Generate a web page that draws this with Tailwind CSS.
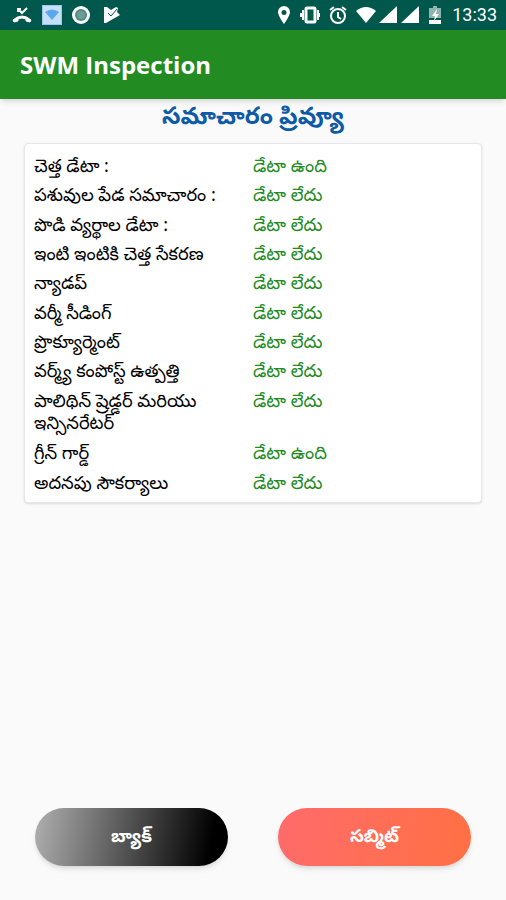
<!DOCTYPE html>
<html lang="te">
<head>
  <meta charset="UTF-8" />
  <meta name="viewport" content="width=device-width, initial-scale=1.0"/>
  <title>SWM Inspection</title>
  <script src="https://cdn.jsdelivr.net/npm/@tailwindcss/browser@4"></script>
</head>
<body class="bg-[#fafafa] min-h-screen flex flex-col font-['Noto_Sans','Noto_Sans_Telugu',sans-serif]">
  <!-- status bar -->
  <div class="h-[30px] shrink-0 bg-[#00574b] text-white flex items-center justify-between pl-3 pr-[9px]">
    <div class="flex items-center gap-[10px]">
      <svg class="w-5 h-5" viewBox="0 0 20 20" fill="none" stroke="#fff">
        <path d="M6 4l4 4 5-5M6 7V4h3" stroke-width="2"/>
        <path d="M1 15q9-8 18 0l-1 2-4-1v-2q-4-2-8 0v2l-4 1z" fill="#fff"/>
      </svg>
      <svg class="w-5 h-5" viewBox="0 0 20 20">
        <rect width="20" height="20" fill="#9cc8ee"/>
        <rect x="1" y="1" width="18" height="18" fill="#c5e0f7"/>
        <path d="M3 7q7-5 14 0l-7 8z" fill="#5aa9ec"/>
      </svg>
      <svg class="w-5 h-5" viewBox="0 0 20 20">
        <circle cx="9" cy="10" r="9" fill="#fff"/>
        <circle cx="9" cy="10" r="6" fill="#4f8b80"/>
        <circle cx="9" cy="10" r="4" fill="#6d9d95"/>
      </svg>
      <svg class="w-5 h-5" viewBox="0 0 20 20">
        <path d="M2 2h3l4 3 5-3 2 1-1 4 3 3-14 8H2z" fill="#fff"/>
        <path d="M6 8l3 3 6-7" fill="none" stroke="#00574b" stroke-width="1"/>
      </svg>
    </div>
    <div class="flex items-center gap-1">
      <svg class="w-4 h-5" viewBox="0 0 16 20">
        <path fill-rule="evenodd" d="M8 1a6 6 0 0 1 6 6c0 4-6 12-6 12S2 11 2 7a6 6 0 0 1 6-6zm0 4a2 2 0 1 0 0 5 2 2 0 0 0 0-5z" fill="#fff"/>
      </svg>
      <svg class="w-6 h-5" viewBox="0 0 24 20" fill="none" stroke="#fff">
        <rect x="10" y="3" width="9" height="14" rx="1" stroke-width="3"/>
        <path d="M7 5v10M22 5v10M5 8v4M24 8v4" stroke-width="2"/>
      </svg>
      <svg class="w-6 h-5" viewBox="0 0 24 20" fill="none" stroke="#fff" stroke-width="2">
        <circle cx="14" cy="11" r="7"/>
        <path d="M14 7v5l3 2M6 5l4-3M22 5l-4-3"/>
      </svg>
      <div class="flex gap-[2px] pl-1">
        <svg class="w-5 h-5" viewBox="0 0 20 20"><path d="M0 6q10-8 20 0L10 18z" fill="#fff"/></svg>
        <svg class="w-5 h-5" viewBox="0 0 20 20"><path d="M1 18L19 1v17z" fill="#fff"/></svg>
        <svg class="w-5 h-5" viewBox="0 0 20 20"><path d="M1 18L19 1v17z" fill="#fff"/></svg>
      </div>
      <svg class="w-5 h-5" viewBox="0 0 20 20">
        <path d="M9 1h4v2h4v10H5V3h4z" fill="#8fb5af"/>
        <path d="M5 15h12v4H5z" fill="#fff"/>
        <path d="M13 4l-5 7h3l-1 5 5-7h-3z" fill="#fff"/>
      </svg>
      <span class="pl-1 font-[Roboto] text-[18px] leading-5">13:33</span>
    </div>
  </div>

  <header class="h-[69px] shrink-0 bg-[#228b22] shadow-md flex items-center px-5">
    <h1 class="text-white text-[24px] font-bold leading-8 font-['Open_Sans',sans-serif]">SWM Inspection</h1>
  </header>

  <main class="grow flex flex-col">
    <h2 class="text-center text-[#0d5aa7] text-[24px] font-bold leading-8">సమాచారం ప్రివ్యూ</h2>

    <section class="mx-6 mt-3 bg-white rounded border border-gray-200 shadow-sm px-2 pt-[7px] pb-[5px]">
      <table class="w-full h-[346px] table-fixed text-left text-[18px] leading-[22px] text-black">
        <colgroup><col class="w-[220px]"/><col/></colgroup>
        <tbody id="rows"></tbody>
      </table>
    </section>

    <div class="mt-auto mb-[34px] px-[35px] flex gap-[50px]">
      <button type="button" class="flex-1 h-[58px] rounded-full bg-linear-[100deg_in_srgb] from-[#b0b0b0] to-black to-90% shadow-md text-white text-[18px] font-bold"><span class="block pb-1">బ్యాక్</span></button>
      <button type="button" class="flex-1 h-[58px] rounded-full bg-linear-[100deg_in_srgb] from-[#ff6b6b] to-[#ff7043] shadow-md text-white text-[18px] font-bold"><span class="block pb-1">సబ్మిట్</span></button>
    </div>
  </main>

  <script>
    const rows = [
      ["చెత్త డేటా :", true],
      ["పశువుల పేడ సమాచారం :", false],
      ["పొడి వ్యర్థాల డేటా :", false],
      ["ఇంటి ఇంటికి చెత్త సేకరణ", false],
      ["న్యాడప్", false],
      ["వర్మీ సీడింగ్", false],
      ["ప్రొక్యూర్మెంట్", false],
      ["వర్మ్య్ కంపోస్ట్ ఉత్పత్తి", false],
      ["పాలిథిన్ ష్రెడ్డర్ మరియు ఇన్సినరేటర్", false],
      ["గ్రీన్ గార్డ్", true],
      ["అదనపు సౌకర్యాలు", false]
    ];

    document.getElementById("rows").innerHTML = rows.map(([name, hasData]) => `
      <tr class="align-top">
        <th scope="row" class="font-normal pl-px pr-8 py-[3px]">${name}</th>
        <td class="py-[3px] text-[#228b22]">${hasData ? "డేటా ఉంది" : "డేటా లేదు"}</td>
      </tr>`).join("");
  </script>
</body>
</html>
